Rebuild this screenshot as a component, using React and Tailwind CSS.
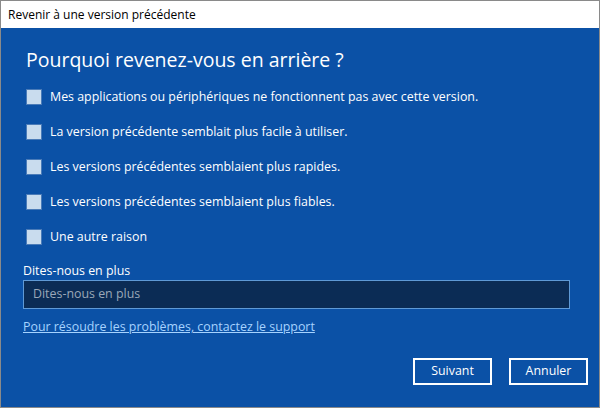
import React from 'react';

const reasons = [
  'Mes applications ou périphériques ne fonctionnent pas avec cette version.',
  'La version précédente semblait plus facile à utiliser.',
  'Les versions précédentes semblaient plus rapides.',
  'Les versions précédentes semblaient plus fiables.',
  'Une autre raison',
];

export default function App() {
  return (
    <div
      className="w-[600px] h-[408px] flex flex-col border border-[#8a8a8a] overflow-hidden"
      style={{ fontFamily: '"Open Sans", "Noto Sans", sans-serif' }}
    >
      <div className="h-[27px] bg-white flex items-center px-[7px] text-[12px] text-black shrink-0">
        Revenir à une version précédente
      </div>
      <div className="flex-1 bg-[#0b51a6] text-white flex flex-col pl-[25px] pr-[29px]">
        <h1 className="text-[19.5px] font-normal mt-[19px] leading-[26px]">
          Pourquoi revenez-vous en arrière ?
        </h1>
        <div className="flex flex-col mt-[15px] gap-[18px]">
          {reasons.map((r) => (
            <label key={r} className="flex items-center gap-[8px] text-[12.4px] leading-[17px]">
              <span className="w-[16px] h-[16px] bg-[#c9dcee] border border-[#4a7bb8] shrink-0" />
              {r}
            </label>
          ))}
        </div>
        <div className="mt-[17px] -ml-[3px] text-[12.4px] leading-[17px]">Dites-nous en plus</div>
        <div className="-ml-[3px] mt-[1px] h-[29px] bg-[#0b2c55] border border-[#5f9ad6] flex items-center px-[9px] text-[12.4px] text-[#9aa8b8]">
          Dites-nous en plus
        </div>
        <a className="-ml-[3px] mt-[9px] text-[12.4px] leading-[17px] text-[#a6d3ff] underline self-start">
          Pour résoudre les problèmes, contactez le support
        </a>
        <div className="flex justify-end gap-[17px] mt-[23px] -mr-[18px]">
          <button className="w-[79px] h-[27px] border-2 border-white text-[12.4px] text-white">Suivant</button>
          <button className="w-[79px] h-[27px] border-2 border-white text-[12.4px] text-white">Annuler</button>
        </div>
      </div>
    </div>
  );
}
